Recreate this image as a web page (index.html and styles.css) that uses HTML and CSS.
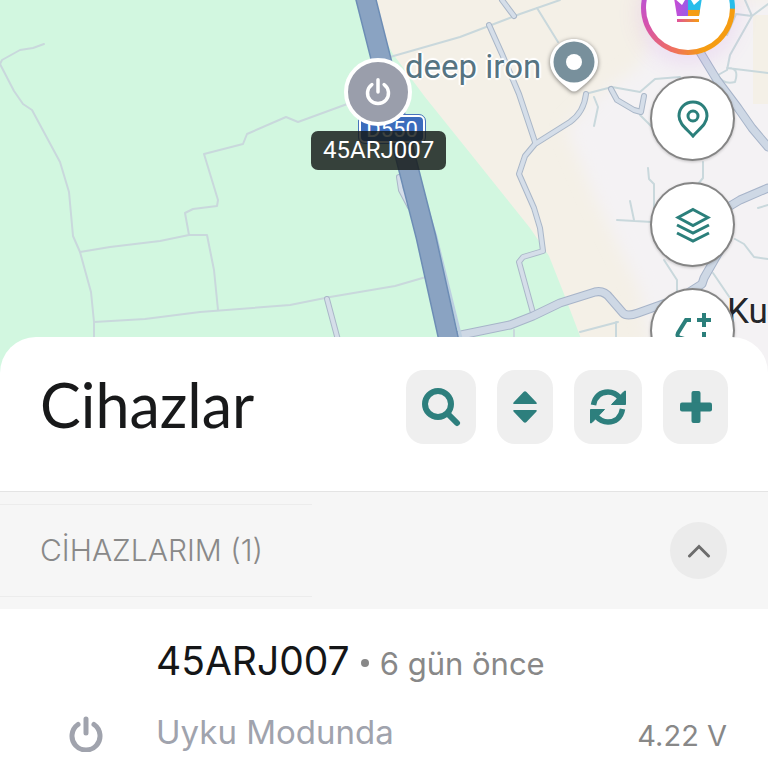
FILE: index.html
```html
<!DOCTYPE html>
<html lang="tr">
<head>
<meta charset="utf-8">
<meta name="viewport" content="width=device-width, initial-scale=1">
<title>Cihazlar</title>
<link rel="stylesheet" href="styles.css">
</head>
<body>
<main class="app">
  <section class="map" aria-label="Harita">
    <svg class="map-tiles" viewBox="0 0 768 376" preserveAspectRatio="xMidYMid slice" aria-hidden="true">
      <defs>
        <filter id="soft"><feGaussianBlur stdDeviation="8"/></filter>
      </defs>
      <rect width="768" height="376" fill="#f4f0e7"/>
      <path filter="url(#soft)" fill="#f4f2f4" d="M566 128L600 94L640 65L665 0H790V400H660L640 290L596 200Z"/>
      <path fill="#f4f0e7" d="M753 15h15v89h-15z"/>
      <path fill="#d2f7e0" d="M0 0H362L393 54L425 97L470 153L530 228L549 256L564 294L580 336L594 376H0Z"/>
      <g class="path-line">
        <path d="M44 44L33 48L20 50L2 60L0 64L14 91L23 104L32 110L60 162L69 192L73 236L80 252L91 292L94 322V376"/>
        <path d="M80 252L110 247L160 241L189 235H207L214 270L218 310"/>
        <path d="M189 235L185 213L193 209L217 206L218 200L204 154L243 144L247 134L286 117L298 122L350 103"/>
        <path d="M94 322L145 319L200 312L290 305L330 297L395 286L426 277"/>
        <path d="M390 57L460 37L520 14L560 0"/><path d="M537 8L558 42"/>
        <path d="M589 93L612 87L640 92L655 79L680 77"/><path d="M594 97L598 107L594 126"/>
        <path d="M640 115L652 127"/><path d="M648 168L649 179L654 184V208"/><path d="M617 220L652 222M630 201L634 220"/>
        <path d="M703 162V178L698 184"/><path d="M735 239L744 244L754 257L768 259"/><path d="M664 260L677 280V292M713 273L730 298"/>
        <path d="M768 4L752 16L730 55L727 70L718 75Q723 85 735 82Q740 67 727 68L768 73M745 0L752 16L736 14L727 35"/>
        <path d="M758 208L768 205M514 330V376M580 332L618 322M616 322V350"/>
      </g>
      <g class="road-edge">
        <path d="M502 0L514 16M489 25L502 54L519 94L535 142"/>
        <path d="M586 94Q584 112 570 122L535 144L525 156L519 174L534 208L540 228L543 251L523 257L519 262L533 313"/>
        <path d="M611 89L617 100L634 110L641 112L644 96"/><path d="M327 299L338 340"/>
        <path d="M399 177L401 190L410 207"/>
      </g>
      <g class="road-fill">
        <path d="M502 0L514 16M489 25L502 54L519 94L535 142"/>
        <path d="M586 94Q584 112 570 122L535 144L525 156L519 174L534 208L540 228L543 251L523 257L519 262L533 313"/>
        <path d="M611 89L617 100L634 110L641 112L644 96"/><path d="M327 299L338 340"/>
        <path d="M399 177L401 190L410 207"/>
      </g>
      <g class="main-edge">
        <path d="M456 336L510 325L533 316L560 303L595 292Q604 290 610 298L623 313Q627 317 638 313L680 298L702 284L704 278L720 250"/>
        <path d="M700 52L717 80L738 108L752 128L768 147M720 212L740 200L768 188"/>
      </g>
      <g class="main-fill">
        <path d="M456 336L510 325L533 316L560 303L595 292Q604 290 610 298L623 313Q627 317 638 313L680 298L702 284L704 278L720 250"/>
        <path d="M700 52L717 80L738 108L752 128L768 147M720 212L740 200L768 188"/>
      </g>
      <path d="M414 165L436 237L463 346" fill="none" stroke="#bccfe0" stroke-width="3"/>
      <path d="M361 -20L380 55L405 155L426 237L451 350" fill="none" stroke="#6d8db5" stroke-width="21"/>
      <path d="M361 -20L380 55L405 155L426 237L451 350" fill="none" stroke="#8aa3c2" stroke-width="18"/>
    </svg>
    <span class="shield">D550</span>
    <span class="place">deep iron</span>
    <svg class="place-pin" viewBox="0 0 52 60" aria-hidden="true">
      <path d="M26 3C12.500 3 2 13 2 26C2 36 9 43 16 49L22 54Q26 57 30 54L36 49C43 43 50 36 50 26C50 13 39.500 3 26 3Z" fill="#fff"/>
      <circle cx="26" cy="26" r="20.500" fill="#78909c"/><circle cx="26" cy="26" r="8" fill="#fff"/>
    </svg>
    <span class="town">Ku</span>
    <span class="marker-name">45ARJ007</span>
    <span class="marker">
      <svg viewBox="0 0 32 34" aria-hidden="true"><path d="M9 8.500A12 12 0 1 0 23 8.500M16 3V17"/></svg>
    </span>
    <div class="map-tools">
      <button class="tool premium" aria-label="Premium">
        <svg width="40" height="40" viewBox="0 5 40 40" aria-hidden="true">
          <defs><linearGradient id="crown" x1="0" x2="1"><stop offset="0" stop-color="#c94bd3"/><stop offset=".48" stop-color="#9b5be8"/><stop offset=".52" stop-color="#27bdea"/><stop offset="1" stop-color="#27bdea"/></linearGradient>
          <linearGradient id="base" x1="0" x2="1"><stop offset="0" stop-color="#e0529c"/><stop offset="1" stop-color="#f59c12"/></linearGradient></defs>
          <path d="M6 15L14 22L20 12L26 22L34 15L31 33H9Z" fill="url(#crown)"/><path d="M20 27H32L31 33H20Z" fill="#f59c12"/><path d="M9 36H31V39H9Z" fill="url(#base)"/>
        </svg>
      </button>
      <button class="tool" aria-label="Konum">
        <svg width="32" height="38" viewBox="0 0 32 38" aria-hidden="true"><path d="M16 2C8 2 2 8 2 16C2 24 10 29 16 36C22 29 30 24 30 16C30 8 24 2 16 2Z"/><circle cx="16" cy="16" r="5"/></svg>
      </button>
      <button class="tool" aria-label="Katmanlar">
        <svg width="36" height="36" viewBox="0 0 36 36" aria-hidden="true"><path d="M18 2.500L33 10.500L18 18.500L3 10.500ZM2 18L18 26L34 18M2 26L18 34L34 26"/></svg>
      </button>
      <button class="tool" aria-label="Ölç">
        <svg width="38" height="38" viewBox="0 0 38 38" aria-hidden="true"><path d="M17 8H12L4 21Q2 25 7 26L20 30M30 1V15M23 8H37M30 20V32" stroke-width="4"/></svg>
      </button>
    </div>
  </section>

  <section class="sheet">
    <header class="sheet-head">
      <h1>Cihazlar</h1>
      <div class="actions">
        <button class="action search" aria-label="Ara"><svg width="40" height="40" viewBox="0 0 40 40" aria-hidden="true"><circle cx="17" cy="17" r="13" fill="none" stroke="currentColor" stroke-width="6"/><path d="M26.500 26.500L36 36" stroke="currentColor" stroke-width="6" stroke-linecap="round"/></svg></button>
        <button class="action sort" aria-label="Sırala"><svg width="26" height="34" viewBox="0 0 26 34" aria-hidden="true"><path d="M2 14H24Q25.500 14 24.500 12.500L14.500 2Q13 .500 11.500 2L1.500 12.500Q.500 14 2 14ZM2 20H24Q25.500 20 24.500 21.500L14.500 32Q13 33.500 11.500 32L1.500 21.500Q.500 20 2 20Z" fill="currentColor"/></svg></button>
        <button class="action refresh" aria-label="Yenile"><svg width="38" height="38" viewBox="0 0 38 38" aria-hidden="true"><path d="M4.500 17C6 8 12 4 19 4Q26 4 31 10M33.500 21C32 30 26 34 19 34Q12 34 7 28" fill="none" stroke="currentColor" stroke-width="5.500"/><path d="M36.500 3V16.500H22.500L35 3.500ZM1.500 35V21.500H15.500L3 34.500Z" fill="currentColor" stroke="currentColor" stroke-linejoin="round"/></svg></button>
        <button class="action add" aria-label="Ekle"><svg width="34" height="34" viewBox="0 0 34 34" aria-hidden="true"><g fill="currentColor"><rect x="12.500" y="1" width="9" height="32" rx="2"/><rect x="1" y="12.500" width="32" height="9" rx="2"/></g></svg></button>
      </div>
    </header>

    <div class="group-head">
      <h2>CİHAZLARIM (1)</h2>
      <button class="collapse" aria-label="Daralt"><svg width="24" height="14" viewBox="0 0 24 14" aria-hidden="true"><path d="M2.500 12L12 2.500L21.500 12" fill="none" stroke="currentColor" stroke-width="3" stroke-linecap="round"/></svg></button>
    </div>

    <article class="device">
      <p class="device-title"><strong>45ARJ007</strong><span class="dot"></span><span>6 gün önce</span></p>
      <svg class="device-power" viewBox="0 0 34 36" aria-hidden="true"><path d="M9 8.500A14 14 0 1 0 25 8.500M17 3V17"/></svg>
      <p class="device-status">Uyku Modunda</p>
      <p class="device-volt">4.22 V</p>
    </article>
  </section>
</main>
</body>
</html>
```

FILE: styles.css
```css
* { box-sizing: border-box; }

body {
  margin: 0;
  background: #fff;
  font-family: Inter, "Liberation Sans", sans-serif;
}

h1, h2, p { margin: 0; font-weight: 400; }

button {
  display: flex;
  align-items: center;
  justify-content: center;
  flex: none;
  border: 0;
  padding: 0;
  cursor: pointer;
}

.app {
  height: 100vh;
  min-height: 600px;
  display: flex;
  flex-direction: column;
  overflow: hidden;
}

/* Map */
.map {
  position: relative;
  height: 376px;
  flex: none;
  overflow: hidden;
  background: #f4f0e7;
  font-family: Roboto, "Liberation Sans", sans-serif;
}

.map-tiles { display: block; width: 100%; height: 100%; }
.map-tiles g { fill: none; stroke-linejoin: round; stroke-linecap: round; }
.path-line { stroke: #c9d8dc; stroke-width: 2; }
.road-edge { stroke: #aab7c8; stroke-width: 6; }
.road-fill { stroke: #d5dee9; stroke-width: 4; }
.main-edge { stroke: #a7b4c9; stroke-width: 9; }
.main-fill { stroke: #ced8e5; stroke-width: 7; }

.shield, .place, .place-pin, .town, .marker, .marker-name { position: absolute; }

.shield {
  left: 359px;
  top: 115px;
  width: 66px;
  height: 28px;
  border: 2px solid #fff;
  border-radius: 6px;
  outline: 1px solid #4774bc;
  background: #3b6cbc;
  color: #fff;
  font-size: 22px;
  line-height: 25px;
  text-align: center;
}

.place {
  left: 405px;
  top: 47px;
  color: #567482;
  font-size: 33px;
  line-height: 40px;
  text-shadow: 0 0 2px #fff, 2px 0 1px #fff, -2px 0 1px #fff, 0 2px 1px #fff, 0 -2px 1px #fff;
}

.place-pin {
  left: 548px;
  top: 36px;
  width: 52px;
  height: 60px;
  filter: drop-shadow(0 1px 2px rgba(0, 0, 0, .5));
}

.town {
  left: 727px;
  top: 292px;
  color: #24262a;
  font-size: 35px;
  line-height: 40px;
  text-shadow: 0 0 3px #fff;
}

.marker {
  left: 344px;
  top: 58px;
  width: 68px;
  height: 68px;
  display: flex;
  align-items: center;
  justify-content: center;
  border: 4px solid #fff;
  border-radius: 50%;
  background: #9a9eab;
}

.marker svg {
  width: 28px;
  height: 30px;
  fill: none;
  stroke: #fff;
  stroke-width: 4;
  stroke-linecap: round;
}

.marker-name {
  left: 311px;
  top: 131px;
  padding: 0 12px;
  border-radius: 7px;
  background: rgba(20, 24, 22, .82);
  color: #fff;
  font-size: 24px;
  line-height: 39px;
}

.map-tools {
  position: absolute;
  top: -39px;
  right: 33px;
  display: flex;
  flex-direction: column;
  align-items: flex-end;
  gap: 21px;
}

.tool {
  width: 85px;
  height: 85px;
  border: 2px solid #858585;
  border-radius: 50%;
  background: #fff;
  box-shadow: 0 1px 3px rgba(0, 0, 0, .2);
}

.tool svg { fill: none; stroke: #2b7f7b; stroke-width: 3; }

.premium {
  width: 94px;
  height: 94px;
  border: 5px solid transparent;
  background:
    linear-gradient(#fff, #fff) padding-box,
    conic-gradient(#27bdea 0 90deg, #f59c12 92deg 160deg, #ef6f60 200deg, #d452b0 250deg, #b155e0 300deg, #27bdea) border-box;
  box-shadow: 0 6px 24px rgba(190, 90, 230, .16);
}

.premium svg { stroke: none; }

/* Sheet */
.sheet {
  position: relative;
  flex: 1;
  margin-top: -39px;
  border-radius: 36px 36px 0 0;
  background: #fff;
}

.sheet-head {
  display: flex;
  align-items: flex-start;
  justify-content: space-between;
  padding: 33px 40px 47px;
  border-bottom: 1px solid #e4e4e4;
}

h1 {
  color: #18191a;
  font-family: Lato, "Liberation Sans", sans-serif;
  font-size: 61px;
  line-height: 70px;
}

.actions { display: flex; gap: 21px; }

.action {
  height: 74px;
  border-radius: 18px;
  background: #efefef;
  color: #2d7f7d;
}

.search { width: 70px; }
.sort { width: 56px; }
.refresh { width: 68px; }
.add { width: 65px; }

.group-head {
  display: flex;
  align-items: center;
  justify-content: space-between;
  padding: 12px 41px 12px 0;
  background: #f6f6f6;
}

h2 {
  width: 312px;
  padding-left: 40px;
  border-top: 1px solid #ececec;
  border-bottom: 1px solid #ececec;
  color: #898989;
  font-size: 30px;
  font-weight: 300;
  line-height: 91px;
  white-space: nowrap;
}

.collapse {
  width: 57px;
  height: 57px;
  border-radius: 50%;
  background: #ebebeb;
  color: #6c6c6c;
}

.device {
  display: grid;
  grid-template-columns: 116px 1fr auto;
  row-gap: 20px;
  padding: 24px 41px 0 40px;
  color: #888;
  font-size: 31px;
  line-height: 40px;
}

.device-title {
  grid-column: 2 / -1;
  display: flex;
  align-items: baseline;
  gap: 11px;
  line-height: 56px;
}

.device-title strong { color: #151617; font-size: 39px; font-weight: 400; }

.dot {
  width: 8px;
  height: 8px;
  border-radius: 50%;
  background: #888;
  align-self: center;
}

.device-power {
  grid-column: 1;
  width: 34px;
  height: 36px;
  margin: 4px 0 0 29px;
  fill: none;
  stroke: #a0a3ad;
  stroke-width: 5;
  stroke-linecap: round;
}

.device-status { color: #a0a3ad; font-size: 33px; }
.device-volt { padding-top: 4px; font-size: 29px; }
```
